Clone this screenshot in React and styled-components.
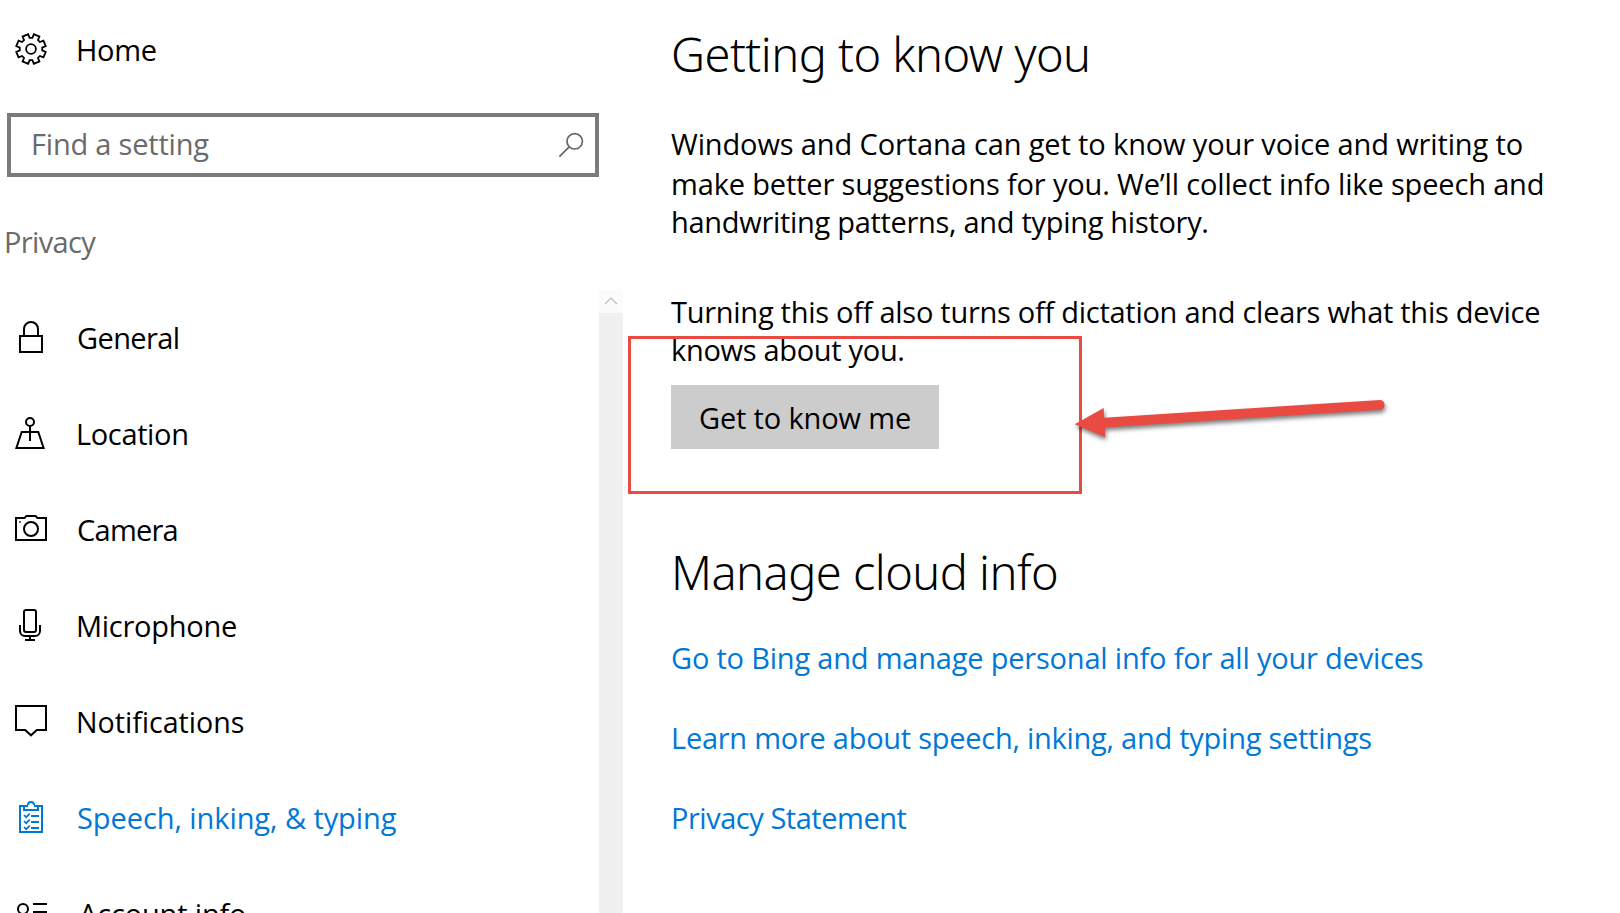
import React from "react";
import styled, { createGlobalStyle } from "styled-components";

const GlobalStyle = createGlobalStyle`
  * { box-sizing: border-box; }
  body {
    margin: 0;
    background: #fff;
    color: #000;
    font-family: "Open Sans", "Noto Sans", sans-serif;
    font-size: 29px;
    overflow: hidden;
  }
`;

const Window = styled.div`
  position: relative;
  display: flex;
  width: 1620px;
  height: 913px;
  overflow: hidden;
  background: #fff;
`;

const Sidebar = styled.aside`
  display: flex;
  flex-direction: column;
  flex: none;
  width: 623px;
  height: 913px;
  padding-top: 1px;
`;

const Label = styled.span`
  display: block;
  padding-top: 2px;
  white-space: nowrap;
  line-height: 40px;
  font-size: ${(p) => p.$size || 29}px;
  letter-spacing: ${(p) => (p.$track ? `${p.$track}px` : "normal")};
`;

const NavRow = styled.a`
  display: flex;
  align-items: center;
  flex: none;
  gap: ${(p) => p.$gap || 29}px;
  height: 96px;
  padding-left: 15px;
  color: ${(p) => (p.$active ? "#0078d7" : "#000")};
`;

const Icon = styled.svg.attrs({ viewBox: "0 0 32 32" })`
  display: block;
  flex: none;
  width: 32px;
  height: 32px;
  fill: none;
  stroke: currentColor;
  stroke-width: 2;
`;

const SearchBox = styled.div`
  display: flex;
  align-items: center;
  justify-content: space-between;
  flex: none;
  width: 592px;
  height: 64px;
  margin: 16px 0 16px 7px;
  padding: 0 11px 0 20px;
  border: 4px solid #7b7b7b;
  color: #6a6a6a;
`;

const Placeholder = styled(Label)`
  padding: 0 0 2px;
`;

const SearchIcon = styled.svg`
  width: 26px;
  height: 26px;
  fill: none;
  stroke: #666;
  stroke-width: 1.7;
`;

const SectionLabel = styled.div`
  display: flex;
  align-items: center;
  flex: none;
  height: 96px;
  padding-left: 4px;
  color: #6a6a6a;
`;

const NavPane = styled.div`
  display: flex;
  flex: 1;
  min-height: 0;
`;

const NavList = styled.nav`
  flex: none;
  width: 599px;
  overflow: hidden;
`;

const Scrollbar = styled.div`
  width: 24px;
  background: #f0f0f0;
`;

const ScrollButton = styled.div`
  display: flex;
  justify-content: center;
  height: 24px;
  padding-top: 8px;
  background: #fbfbfb;
`;

const Main = styled.main`
  display: flex;
  flex-direction: column;
  align-items: flex-start;
  padding: 24px 0 0 48px;
`;

const Heading = styled.h1`
  margin: 0;
  font-family: "Noto Sans", "Open Sans", sans-serif;
  font-size: 47px;
  font-weight: 300;
  line-height: 60px;
  letter-spacing: -0.54px;
  white-space: nowrap;
`;

const Paragraph = styled.p`
  display: flex;
  flex-direction: column;
  margin: ${(p) => p.$top}px 0 0;
`;

const Line = styled(Label)`
  padding: 0;
  line-height: ${(p) => p.$height}px;
`;

const Button = styled.button`
  width: 268px;
  height: 64px;
  margin: 16px 0 93px;
  padding: 0;
  border: 0;
  background: #ccc;
  color: #000;
  font-family: inherit;
`;

const Links = styled.div`
  display: flex;
  flex-direction: column;
  margin-top: 15px;
`;

const Link = styled.a`
  display: flex;
  align-items: center;
  height: 80px;
  color: #0078d7;
`;

const Callout = styled.div`
  position: absolute;
  left: 628px;
  top: 336px;
  width: 454px;
  height: 158px;
  border: 3px solid #e94b43;
`;

const Arrow = styled.svg`
  position: absolute;
  left: 1070px;
  top: 395px;
  width: 330px;
  height: 60px;
  fill: #e94b43;
  filter: drop-shadow(1px 3px 2px rgba(0, 0, 0, 0.5));
`;

const polar = (radius, degrees) => {
  const a = ((degrees - 90) * Math.PI) / 180;
  return `${(16 + radius * Math.cos(a)).toFixed(2)} ${(16 + radius * Math.sin(a)).toFixed(2)}`;
};

const gearPath = `M${Array.from({ length: 8 }, (_, i) => i * 45)
  .map((d) => [polar(11.3, d + 7), polar(15, d + 11), polar(15, d + 34), polar(11.3, d + 38)].join("L"))
  .join("L")}Z`;

const icons = {
  gear: (
    <>
      <path d={gearPath} strokeWidth="1.8" />
      <circle cx="16" cy="16" r="4.9" strokeWidth="1.8" />
    </>
  ),
  lock: <path d="M5 15H27V31H5ZM9 15V8a7 7 0 0 1 14 0v7" />,
  location: (
    <>
      <circle cx="15" cy="5" r="4" />
      <path d="M15 9V24M6.7 15H23.3L28.6 31H1.4Z" />
    </>
  ),
  camera: (
    <>
      <path d="M1 5H9.5L11.5 3H20.5L22.5 5H31V27H1Z" />
      <circle cx="16" cy="16" r="7" />
      <path d="M4.2 9H5.8" strokeWidth="1.6" />
    </>
  ),
  microphone: (
    <>
      <rect x="9" y="1" width="12" height="22" rx="2" />
      <path d="M5 16v6a5 5 0 0 0 5 5h10a5 5 0 0 0 5-5v-6M15 27v4M10 31h10" />
    </>
  ),
  message: <path d="M1 1H31V25H21.8L16 30.3L10.2 25H1Z" />,
  clipboard: (
    <>
      <path d="M5 5H27V31H5ZM9 5V9H23V5M12.5 5C13 5 13 4.5 13 4a3 3 0 0 1 6 0c0 .5 0 1 .5 1" />
      <path d="M13 5h6" stroke="#fff" />
      <path d="M16 15h8M16 21h8M16 27h8" />
      <path d="M9 14l2.2 2.2 3.6-3.6M9 20l2.2 2.2 3.6-3.6M9 26l2.2 2.2 3.6-3.6" strokeWidth="1.7" />
    </>
  ),
  account: (
    <>
      <circle cx="8" cy="12" r="5" />
      <path d="M18 7H32M18 15H32M1 27a7 7 0 0 1 14 0M18 23H32" />
    </>
  ),
};

const navItems = [
  { icon: "lock", text: "General", track: -0.6, gap: 30 },
  { icon: "location", text: "Location", track: -0.36 },
  { icon: "camera", text: "Camera", track: -0.75, gap: 30 },
  { icon: "microphone", text: "Microphone", track: -0.27 },
  { icon: "message", text: "Notifications", size: 28.6 },
  { icon: "clipboard", text: "Speech, inking, & typing", track: -0.08, gap: 30, active: true },
  { icon: "account", text: "Account info", track: -0.16, gap: 32 },
];

const intro = [
  { text: "Windows and Cortana can get to know your voice and writing to", track: -0.13, height: 40 },
  { text: "make better suggestions for you. We’ll collect info like speech and", track: -0.16, height: 39 },
  { text: "handwriting patterns, and typing history.", track: -0.3, height: 38 },
];

const notice = [
  { text: "Turning this off also turns off dictation and clears what this device", track: -0.27, height: 39 },
  { text: "knows about you.", track: -0.31, height: 38 },
];

const links = [
  { text: "Go to Bing and manage personal info for all your devices", track: -0.2 },
  { text: "Learn more about speech, inking, and typing settings", track: -0.26 },
  { text: "Privacy Statement", track: -0.47 },
];

const Lines = ({ top, lines }) => (
  <Paragraph $top={top}>
    {lines.map((l) => (
      <Line key={l.text} $track={l.track} $height={l.height}>
        {l.text}
      </Line>
    ))}
  </Paragraph>
);

const NavItem = ({ icon, text, track, size, gap, active }) => (
  <NavRow $active={active} $gap={gap}>
    <Icon>{icons[icon]}</Icon>
    <Label $track={track} $size={size}>
      {text}
    </Label>
  </NavRow>
);

export default function App() {
  return (
    <Window>
      <GlobalStyle />
      <Sidebar>
        <NavItem icon="gear" text="Home" track={-0.33} />
        <SearchBox>
          <Placeholder $track={-0.2}>Find a setting</Placeholder>
          <SearchIcon viewBox="0 0 26 26">
            <circle cx="16.7" cy="9.3" r="7.7" />
            <path d="M11.2 14.8L1.4 24.6" />
          </SearchIcon>
        </SearchBox>
        <SectionLabel>
          <Label $track={-0.66}>Privacy</Label>
        </SectionLabel>
        <NavPane>
          <NavList>
            {navItems.map((item) => (
              <NavItem key={item.text} {...item} />
            ))}
          </NavList>
          <Scrollbar>
            <ScrollButton>
              <svg width="14" height="8" viewBox="0 0 14 8" fill="none" stroke="#bdbdbd" strokeWidth="1.2">
                <path d="M1 7L7 1L13 7" />
              </svg>
            </ScrollButton>
          </Scrollbar>
        </NavPane>
      </Sidebar>
      <Main>
        <Heading>Getting to know you</Heading>
        <Lines top={40} lines={intro} />
        <Lines top={51} lines={notice} />
        <Button>
          <Label $track={-0.15}>Get to know me</Label>
        </Button>
        <Heading as="h2">Manage cloud info</Heading>
        <Links>
          {links.map((l) => (
            <Link key={l.text}>
              <Label $track={l.track}>{l.text}</Label>
            </Link>
          ))}
        </Links>
      </Main>
      <Callout />
      <Arrow viewBox="0 0 330 60">
        <path d="M4.7 29.3L33.7 13L34.2 22.8L310.3 4.9A5 5 0 0 1 310.7 14.7L34.8 32.4L35.2 42.3Z" />
      </Arrow>
    </Window>
  );
}
